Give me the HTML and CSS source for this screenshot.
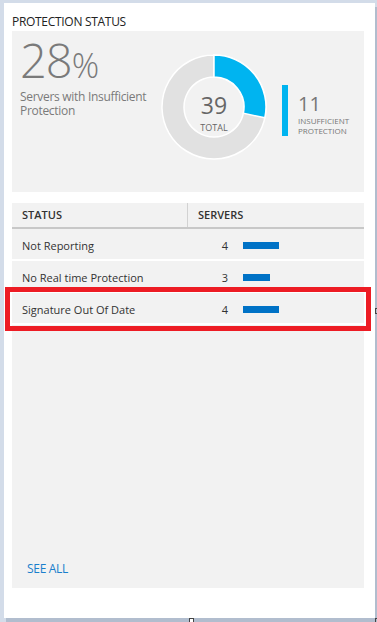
FILE: index.html
```html
<!DOCTYPE html>
<html lang="en">
<head>
  <meta charset="UTF-8">
  <meta name="viewport" content="width=device-width, initial-scale=1.0">
  <title>Protection Status</title>
  <link rel="stylesheet" href="styles.css">
</head>
<body>
  <div class="page">
    <div class="card">
      <div class="card-title">PROTECTION STATUS</div>

      <div class="summary">
        <div class="summary-left">
          <div class="big-percent">28<span class="pct">%</span></div>
          <div class="summary-caption">Servers with Insufficient Protection</div>
        </div>

        <div class="donut">
          <svg width="108" height="108" viewBox="0 0 108 108">
            <path d="M54 2 A52 52 0 1 1 53.99 2 L53.99 24 A30 30 0 1 0 54 24 Z" fill="#e1e1e1" stroke="#fff" stroke-width="1.5"/>
            <path d="M54 2 A52 52 0 0 1 104.86 64.81 L83.34 60.24 A30 30 0 0 0 54 24 Z" fill="#00b4f0" stroke="#fff" stroke-width="1.5"/>
          </svg>
          <div class="donut-label">
            <div class="donut-num">39</div>
            <div class="donut-sub">TOTAL</div>
          </div>
        </div>

        <div class="legend-bar"></div>
        <div class="legend-text">
          <div class="legend-num">11</div>
          <div class="legend-sub">INSUFFICIENT<br>PROTECTION</div>
        </div>
      </div>

      <div class="table">
        <div class="table-head">
          <div class="col-status">STATUS</div>
          <div class="col-servers">SERVERS</div>
        </div>
        <div class="table-row">
          <div class="col-status">Not Reporting</div>
          <div class="count">4</div>
          <div class="bar" style="width: 36px"></div>
        </div>
        <div class="table-row">
          <div class="col-status">No Real time Protection</div>
          <div class="count">3</div>
          <div class="bar" style="width: 27px"></div>
        </div>
        <div class="table-row">
          <div class="col-status">Signature Out Of Date</div>
          <div class="count">4</div>
          <div class="bar" style="width: 36px"></div>
        </div>
        <div class="table-fill">
          <a class="see-all" href="#">SEE ALL</a>
        </div>
      </div>

      <div class="highlight"></div>
    </div>

    <span class="handle handle-side"></span>
    <span class="handle handle-bottom"></span>
    <span class="handle handle-corner"></span>
  </div>
</body>
</html>
```

FILE: styles.css
```css
* {
  box-sizing: border-box;
}

body {
  margin: 0;
  font-family: "Open Sans", "Segoe UI", Arial, sans-serif;
  background-color: #d3dce9;
}

.page {
  position: relative;
  width: 377px;
  height: 622px;
  padding: 3px 0 0 4px;
  overflow: hidden;
}

.card {
  position: relative;
  width: 371px;
  height: 615px;
  display: flex;
  flex-direction: column;
  padding: 0 11px 30px 8px;
  background-color: white;
  box-shadow: 2px 4px 0 #b1bdce;
}

.card-title {
  padding-top: 11px;
  margin-bottom: 1px;
  font-size: 12px;
  line-height: 16px;
  letter-spacing: -0.3px;
  color: #222;
}

/* summary panel */
.summary {
  display: flex;
  align-items: flex-start;
  height: 161px;
  background-color: #f2f2f2;
}

.summary-left {
  width: 148px;
  padding: 6px 0 0 8px;
  color: #7a7a7a;
}

.big-percent {
  font-size: 47px;
  font-weight: 300;
  line-height: 47px;
  letter-spacing: -1px;
}

.big-percent .pct {
  font-size: 34px;
  letter-spacing: 0;
}

.summary-caption {
  margin-top: 1px;
  font-size: 12px;
  line-height: 14px;
  letter-spacing: -0.3px;
}

.donut {
  display: grid;
  margin-top: 22px;
}

.donut svg,
.donut-label {
  grid-area: 1 / 1;
}

.donut-label {
  padding-top: 40px;
  text-align: center;
  color: #666;
}

.donut-num {
  font-size: 23px;
  line-height: 24px;
}

.donut-sub {
  margin-top: 5px;
  font-size: 9px;
  line-height: 11px;
}

.legend-bar {
  width: 6px;
  height: 51px;
  margin: 54px 0 0 14px;
  background-color: #00b4f0;
}

.legend-text {
  margin: 63px 0 0 10px;
  color: #777;
}

.legend-num {
  font-size: 20px;
  line-height: 20px;
  margin-bottom: 2px;
}

.legend-sub {
  font-size: 8px;
  line-height: 10px;
}

/* table */
.table {
  flex: 1;
  display: flex;
  flex-direction: column;
  margin-top: 11px;
}

.table-head {
  display: flex;
  height: 26px;
  background-color: #f2f2f2;
  border-bottom: 2px solid #c8c8c8;
  font-size: 11px;
  font-weight: 600;
  line-height: 24px;
  color: #333;
}

.table-head .col-status {
  border-right: 1px solid #d2d2d2;
}

.col-status {
  width: 176px;
  padding-left: 10px;
}

.col-servers {
  padding-left: 10px;
}

.table-row {
  display: flex;
  align-items: center;
  height: 30px;
  padding-top: 2px;
  margin-bottom: 2px;
  background-color: #f2f2f2;
  font-size: 11px;
  line-height: 27px;
  color: #333;
}

.count {
  width: 40px;
  text-align: right;
}

.bar {
  height: 7px;
  margin-left: 15px;
  background-color: #0072c6;
}

.table-fill {
  flex: 1;
  display: flex;
  flex-direction: column;
  justify-content: flex-end;
  padding: 0 0 11px 15px;
  background-color: #f2f2f2;
}

.see-all {
  font-size: 12px;
  line-height: 16px;
  letter-spacing: -0.3px;
  color: #1a7fcc;
  text-decoration: none;
}

/* red annotation box */
.highlight {
  position: absolute;
  left: 1px;
  top: 284px;
  width: 366px;
  height: 44px;
  border: 5px solid #ed1c24;
}

/* selection handles from the editor */
.handle {
  position: absolute;
  border: 1px solid #444;
}

.handle-side {
  left: 375px;
  top: 308px;
  width: 4px;
  height: 6px;
  border-right: none;
}

.handle-bottom {
  left: 189px;
  top: 618px;
  width: 5px;
  height: 6px;
  background-color: white;
}

.handle-corner {
  left: 375px;
  top: 618px;
  width: 4px;
  height: 6px;
  border-right: none;
  border-bottom: none;
}
```
